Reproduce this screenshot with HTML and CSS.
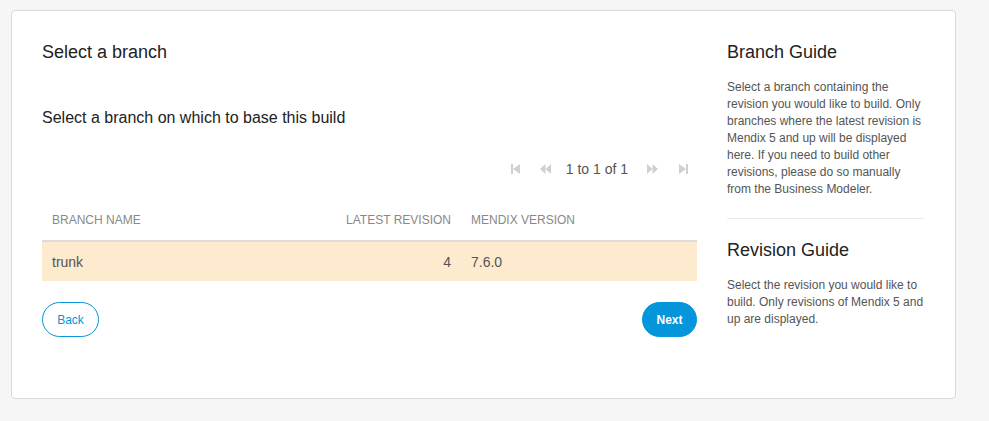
FILE: index.html
```html
<!DOCTYPE html>
<html>
<head>
<meta charset="utf-8">
<link rel="stylesheet" href="styles.css">
</head>
<body>
<div class="card">
  <div class="main">
    <h2 class="title">Select a branch</h2>
    <h3 class="subtitle">Select a branch on which to base this build</h3>
    <div class="pager">
      <svg class="pi first" width="9" height="10" viewBox="0 0 9 10"><rect x="0" y="0" width="2" height="10" fill="#d0d0d0"/><polygon points="9,0 2,5 9,10" fill="#d0d0d0"/></svg>
      <svg class="pi prev" width="11" height="10" viewBox="0 0 11 10"><polygon points="5.5,0 0,5 5.5,10" fill="#d0d0d0"/><polygon points="11,0 5.5,5 11,10" fill="#d0d0d0"/></svg>
      <span class="pager-text">1 to 1 of 1</span>
      <svg class="pi next" width="11" height="10" viewBox="0 0 11 10"><polygon points="0,0 5.5,5 0,10" fill="#d0d0d0"/><polygon points="5.5,0 11,5 5.5,10" fill="#d0d0d0"/></svg>
      <svg class="pi last" width="9" height="10" viewBox="0 0 9 10"><polygon points="0,0 7,5 0,10" fill="#d0d0d0"/><rect x="7" y="0" width="2" height="10" fill="#d0d0d0"/></svg>
    </div>
    <table class="grid">
      <thead>
        <tr>
          <th class="c-name">BRANCH NAME</th>
          <th class="c-rev">LATEST REVISION</th>
          <th class="c-ver">MENDIX VERSION</th>
        </tr>
      </thead>
      <tbody>
        <tr class="selected">
          <td class="c-name">trunk</td>
          <td class="c-rev">4</td>
          <td class="c-ver">7.6.0</td>
        </tr>
      </tbody>
    </table>
    <div class="actions">
      <button class="btn btn-back">Back</button>
      <button class="btn btn-next">Next</button>
    </div>
  </div>
  <aside class="side">
    <h3 class="side-title">Branch Guide</h3>
    <p class="side-text">Select a branch containing the revision you would like to build. Only branches where the latest revision is Mendix 5 and up will be displayed here. If you need to build other revisions, please do so manually from the Business Modeler.</p>
    <hr class="sep">
    <h3 class="side-title">Revision Guide</h3>
    <p class="side-text">Select the revision you would like to build. Only revisions of Mendix 5 and up are displayed.</p>
  </aside>
</div>
</body>
</html>
```

FILE: styles.css
```css
html, body {
  margin: 0;
  padding: 0;
}
body {
  background: #f6f6f6;
  font-family: "Liberation Sans", Arial, sans-serif;
  color: #333;
  padding: 10px 0 0 11px;
}
.card {
  box-sizing: border-box;
  width: 945px;
  height: 389px;
  background: #fff;
  border: 1px solid #d9d9d9;
  border-radius: 4px;
  padding: 30px 30px 30px 30px;
  display: flex;
  gap: 30px;
}
.main {
  width: 655px;
  flex: none;
}
.title {
  margin: 0;
  font-size: 18px;
  font-weight: normal;
  line-height: 22px;
  color: #222;
}
.subtitle {
  margin: 44px 0 0 0;
  font-size: 16px;
  font-weight: normal;
  line-height: 22px;
  color: #222;
}
.pager {
  margin-top: 30px;
  height: 20px;
  display: flex;
  align-items: center;
  justify-content: flex-end;
  padding-right: 9px;
  color: #555;
  font-size: 14px;
}
.pi { display: block; }
.first { margin-right: 20px; }
.prev { margin-right: 15px; }
.pager-text { margin-right: 19px; }
.next { margin-right: 21px; }
.grid {
  margin-top: 20px;
  width: 100%;
  border-collapse: collapse;
}
.grid th {
  height: 41px;
  padding: 0 10px;
  font-size: 12px;
  font-weight: normal;
  color: #888;
  text-align: left;
  border-bottom: 2px solid #dcdcdc;
  vertical-align: middle;
}
.grid td {
  height: 39px;
  padding: 0 10px;
  font-size: 14px;
  color: #555;
  vertical-align: middle;
}
.grid .c-rev {
  text-align: right;
  width: 1%;
  white-space: nowrap;
}
.grid .c-ver {
  width: 216px;
}
.selected td {
  background: #fdeacf;
}
.actions {
  margin-top: 21px;
  display: flex;
  justify-content: space-between;
}
.btn {
  height: 35px;
  border-radius: 18px;
  font-family: "Liberation Sans", Arial, sans-serif;
  font-size: 12px;
  cursor: pointer;
  padding: 0;
}
.btn-back {
  width: 57px;
  background: #fff;
  border: 1px solid #0595db;
  color: #0595db;
}
.btn-next {
  width: 55px;
  background: #0595db;
  border: 1px solid #0595db;
  color: #fff;
  font-weight: bold;
}
.side {
  width: 197px;
  flex: none;
}
.side-title {
  margin: 0;
  font-size: 18px;
  font-weight: normal;
  line-height: 23px;
  color: #222;
}
.side-text {
  margin: 15px 0 0 0;
  font-size: 12px;
  line-height: 17px;
  color: #555;
}
.sep {
  margin: 20px 0 20px 0;
  border: 0;
  border-top: 1px solid #eaeaea;
  height: 0;
}
```
